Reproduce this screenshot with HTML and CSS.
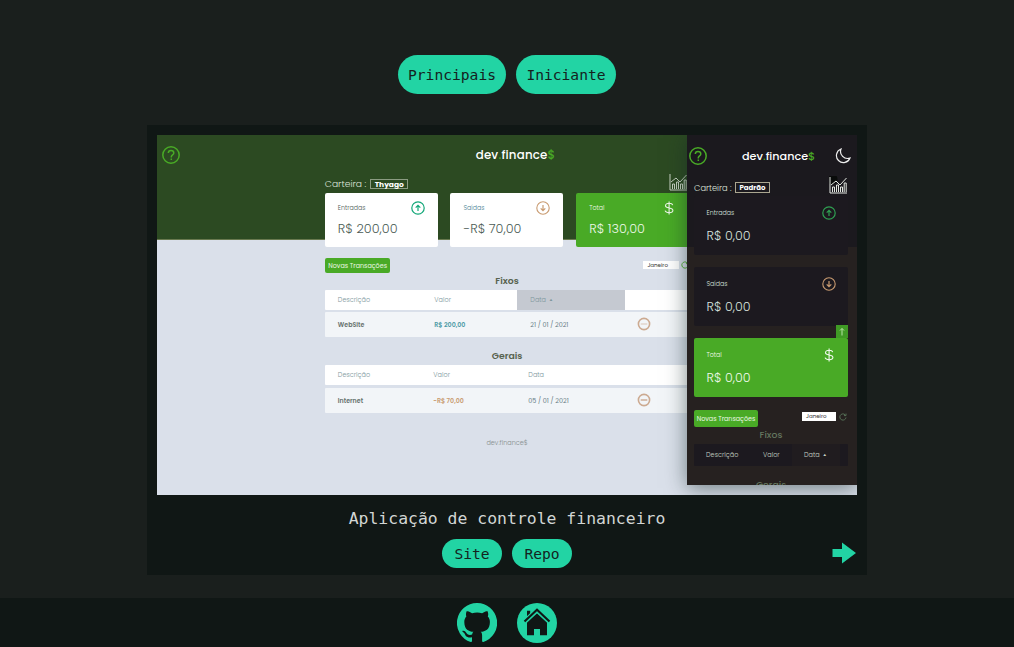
FILE: index.html
```html
<!DOCTYPE html>
<html lang="pt-BR">
<head>
<meta charset="utf-8">
<title>Projetos</title>
<link rel="stylesheet" href="styles.css">
</head>
<body>
<svg class="defs" width="0" height="0">
  <symbol id="help" viewBox="0 0 18 18"><circle cx="9" cy="9" r="8.2" fill="none" stroke="currentColor" stroke-width="1.5"/><path d="M6.3 7.1C6.3 5.4 7.4 4.5 9 4.5s2.8 1 2.8 2.5c0 1.9-2.5 2-2.5 3.8v.7M9.3 12.6v1.4" fill="none" stroke="currentColor" stroke-width="1.5"/></symbol>
  <symbol id="up" viewBox="0 0 14 14"><circle cx="7" cy="7" r="6.2" fill="none" stroke="currentColor" stroke-width="1.2"/><path d="M7 10V4.5M4.7 6.6 7 4.3l2.3 2.3" fill="none" stroke="currentColor" stroke-width="1.2"/></symbol>
  <symbol id="down" viewBox="0 0 14 14"><circle cx="7" cy="7" r="6.2" fill="none" stroke="currentColor" stroke-width="1.1"/><path d="M7 4v5.5M4.7 7.4 7 9.7l2.3-2.3" fill="none" stroke="currentColor" stroke-width="1.2"/></symbol>
  <symbol id="dollar" viewBox="0 0 10 14"><path d="M8.7 4.1C8.3 2.9 7 2.3 5.1 2.3 3 2.3 1.5 3.2 1.5 4.7 1.5 8 8.9 5.9 8.9 9.3c0 1.6-1.5 2.5-3.7 2.5C3 11.8 1.5 11 1.1 9.7M5.1.5v13" fill="none" stroke="currentColor" stroke-width="1.1"/></symbol>
  <symbol id="chart" viewBox="0 0 18 18"><path d="M1 1v16h17M3.500 16v-5h2v5M7.500 16V9h2v7M11.500 16v-5h2v5M15.200 16V7h2v9M2 9l5-4 4 4 6.500-7" fill="none" stroke="currentColor" stroke-width="1"/></symbol>
  <symbol id="minus" viewBox="0 0 14 14"><circle cx="7" cy="7" r="5.600" fill="none" stroke="currentColor" stroke-width="1.6"/><path d="M3.700 7h6.600" stroke="currentColor" stroke-width="1.400"/></symbol>
  <symbol id="minus-faint" viewBox="0 0 14 14"><circle cx="7" cy="7" r="5.600" fill="none" stroke="currentColor" stroke-width="1.6"/><path d="M3.700 7h6.600" stroke="currentColor" stroke-opacity=".45" stroke-width="1.400"/></symbol>
  <symbol id="refresh" viewBox="0 0 8 8"><path d="M7 4.500A3.100 3.100 0 1 1 6 1.700M7 .6v2H5" fill="none" stroke="currentColor" stroke-width=".9"/></symbol>
</svg>

<nav class="filters">
  <a class="filter">Principais</a>
  <a class="filter">Iniciante</a>
</nav>

<main class="project">
  <div class="shot">
    <div class="desk">
      <svg class="help"><use href="#help"/></svg>
      <div class="desk-body">
        <div class="logo">dev<i>.</i>finance<i>$</i></div>
        <div class="wallet"><span>Carteira :</span><b>Thyago</b><svg class="chart"><use href="#chart"/></svg></div>
        <div class="cards">
          <div class="card"><span class="label">Entradas</span><svg class="ic up"><use href="#up"/></svg><span class="value">R$ 200,00</span></div>
          <div class="card"><span class="label blue">Saídas</span><svg class="ic down"><use href="#down"/></svg><span class="value">-R$ 70,00</span></div>
          <div class="card total"><span class="label">Total</span><svg class="ic"><use href="#dollar"/></svg><span class="value">R$ 130,00</span></div>
        </div>
        <div class="tools"><span class="new">Novas Transações</span><span class="month">Janeiro</span><svg class="refresh"><use href="#refresh"/></svg></div>
        <h3>Fixos</h3>
        <div class="row head"><span>Descrição</span><span>Valor</span><span class="sorted">Data&nbsp; <em>▲</em></span><span></span></div>
        <div class="row"><b>WebSite</b><b class="in">R$ 200,00</b><span class="date">21 / 01 / 2021</span><svg class="del"><use href="#minus-faint"/></svg></div>
        <h3 class="second">Gerais</h3>
        <div class="row head late"><span>Descrição</span><span>Valor</span><span>Data</span><span></span></div>
        <div class="row late"><b>Internet</b><b class="out">-R$ 70,00</b><span class="date">05 / 01 / 2021</span><svg class="del"><use href="#minus"/></svg></div>
        <div class="credit">dev.finance$</div>
      </div>
    </div>

    <div class="phone">
      <div class="phone-top">
        <svg class="help"><use href="#help"/></svg>
        <div class="logo">dev<i>.</i>finance<i>$</i></div>
        <svg class="moon" viewBox="0 0 16 16"><path d="M6 1A7 7 0 1 0 15 10 7 7 0 0 1 6 1Z" fill="none" stroke="#eee" stroke-width="1.200"/></svg>
      </div>
      <div class="wallet"><span>Carteira :</span><b>Padrão</b><span class="chart-wrap"><svg class="chart"><use href="#chart"/></svg></span></div>
      <div class="stack">
        <div class="card"><span class="label">Entradas</span><svg class="ic up"><use href="#up"/></svg><span class="value">R$ 0,00</span></div>
        <div class="card"><span class="label">Saídas</span><svg class="ic down"><use href="#down"/></svg><span class="value">R$ 0,00</span></div>
        <div class="card total"><span class="label">Total</span><svg class="ic"><use href="#dollar"/></svg><span class="value">R$ 0,00</span>
          <svg class="tab" viewBox="0 0 12 12"><path d="M6 10V3M4 5l2-2 2 2" fill="none" stroke="#b9e3a8"/></svg></div>
      </div>
      <div class="tools"><span class="new">Novas Transações</span><span class="month">Janeiro</span><svg class="refresh"><use href="#refresh"/></svg></div>
      <h3>Fixos</h3>
      <div class="row head"><span>Descrição</span><span>Valor</span><span class="sorted">Data&nbsp; <em>▲</em></span><span></span></div>
      <h3 class="second">Gerais</h3>
    </div>
  </div>
  <h2>Aplicação de controle financeiro</h2>
  <div class="actions">
    <a class="action">Site</a><a class="action">Repo</a>
    <svg class="next" viewBox="0 0 24 22"><path d="M.5 7H10V.5L24 11 10 21.500V15H.5Z" fill="#22d4a4"/></svg>
  </div>
</main>

<footer class="footer">
  <svg class="social" viewBox="0 0 40 40"><path d="M20 0A20 20 0 0 0 13.700 39Q15 39.200 15 38V34.300C9.500 35.400 8.300 32 8.300 32 7.400 29.700 6 29 6 29c-1.800-1.300.2-1.200.2-1.200 2 .1 3 2 3 2 1.800 3 4.700 2.200 5.900 1.700.2-1.300.7-2.200 1.300-2.700-4.500-.5-9.100-2.200-9.100-9.900 0-2.200.8-4 2.100-5.400-.2-.5-.9-2.500.2-5.300 0 0 1.700-.5 5.500 2.100a19 19 0 0 1 10 0C28.900 7.700 30.600 8.200 30.600 8.200c1.100 2.800.4 4.800.2 5.300 1.300 1.400 2.100 3.200 2.100 5.400 0 7.700-4.700 9.400-9.200 9.900.8.600 1.400 1.800 1.400 3.700V38q0 1.200 1.300 1A20 20 0 0 0 20 0Z" fill="#22d4a4"/></svg>
  <svg class="social" viewBox="0 0 40 40"><circle cx="20" cy="20" r="20" fill="#22d4a4"/><path d="M10 7.800h3.200v4.500l-3.200 3ZM20 10 30 19V32.300h-7V26h-6v6.300h-7V19Z" fill="#101715"/><path d="M7.500 18.800 20 7l12.500 11.800" fill="none" stroke="#22d4a4" stroke-width="4.800"/><path d="M7.500 18.500 20 6.700l12.500 11.800" fill="none" stroke="#101715" stroke-width="2.100"/></svg>
</footer>
</body>
</html>
```
FILE: styles.css
```css
* { box-sizing: border-box; }
body {
  margin: 0;
  height: 647px;
  overflow: hidden;
  display: flex;
  flex-direction: column;
  align-items: center;
  background: #1a1f1d;
  font-family: "DejaVu Sans Mono", monospace;
}
svg { display: block; flex: none; }
.defs { position: absolute; }

.filters { display: flex; gap: 10px; margin-top: 55px; }
.filter {
  height: 39px;
  padding: 0 10px;
  border-radius: 20px;
  background: #22d4a4;
  color: #14231e;
  font-size: 14.62px;
  line-height: 40px;
}
.filter:last-child { padding: 0 10.400px; }

.project {
  width: 720px;
  height: 450px;
  margin-top: 31px;
  padding: 10px;
  background: #101715;
}
.project h2 {
  margin: 11px 0 0;
  height: 24px;
  text-align: center;
  color: #d2d6d4;
  font-size: 16.450px;
  font-weight: 400;
  line-height: 25px;
}
.actions {
  display: grid;
  grid-template-columns: 60px 60px 1fr;
  gap: 10px;
  padding-left: 285px;
  margin-top: 9px;
}
.action {
  height: 29px;
  border-radius: 15px;
  background: #22d4a4;
  color: #14231e;
  font-size: 14.620px;
  line-height: 30px;
  text-align: center;
}
.next { width: 24px; height: 22px; justify-self: end; margin: 3px 1px 0 0; }

.footer {
  display: flex;
  justify-content: center;
  gap: 20px;
  width: 100%;
  height: 49px;
  margin-top: 23px;
  padding-top: 5px;
  background: #101715;
}
.social { width: 40px; height: 40px; }

/* Project preview */
.shot {
  position: relative;
  width: 700px;
  height: 360px;
  overflow: hidden;
  font-family: Poppins, Inter, sans-serif;
  white-space: nowrap;
}
.desk {
  display: flex;
  height: 360px;
  background: linear-gradient(#2c4a22 0 104px, #69794f 104px 105px, #dae0ea 105px);
}
.help { width: 18px; height: 18px; color: #49aa26; }
.desk > .help { margin: 11px 0 0 5px; }
.desk-body { width: 364.500px; margin-left: 144.800px; }
.logo { color: #fff; font-size: 11.800px; font-weight: 500; line-height: 16px; text-align: center; }
.logo i { color: #49aa26; font-style: normal; }
.desk .logo { padding-top: 12px; height: 37px; padding-left: 17px; letter-spacing: .2px; }
.wallet { display: flex; align-items: center; color: #dfe5dc; font-size: 9.200px; font-weight: 300; }
.wallet b {
  border: 1px solid #8b9b82;
  color: #fff;
  font-size: 7.500px;
  font-weight: 700;
  text-align: center;
}
.desk .wallet { height: 20px; padding-top: 4px; }
.desk .wallet b { width: 38px; height: 10px; margin-left: 4px; line-height: 9px; }
.chart { width: 18px; height: 18px; color: #c6d0c1; }
.desk .chart { margin: -4px 2px 0 auto; }

.card {
  display: grid;
  grid-template-columns: 1fr 14px;
  grid-template-rows: 14px 1fr;
  border-radius: 2px;
  background: #fff;
  color: #4b5b54;
}
.label { font-size: 6.300px; font-weight: 300; line-height: 14px; }
.value { font-size: 12.800px; font-weight: 300; line-height: 16px; }
.ic { width: 14px; height: 14px; }
.up { color: #12a778; }
.down { color: #c99b71; }
.desk .cards { display: grid; grid-template-columns: repeat(3, 113px); gap: 12.700px; margin-top: 1px; }
.desk .card { height: 54px; padding: 8px 13px 0; }
.desk .value { margin-top: 6px; }
.blue { color: #477f92; }
.card.total { background: #49aa26; color: #eef8e9; }

.tools { display: flex; }
.new {
  border-radius: 2px;
  background: #49aa26;
  color: #e9f7e3;
  font-size: 6.400px;
  text-align: center;
}
.month { background: #fff; color: #333; font-size: 5.500px; }
.desk .tools { margin-top: 11px; }
.desk .new { width: 66px; height: 15px; line-height: 16px; }
.desk .month { width: 36px; height: 8px; margin: 3px 0 0 253px; padding-left: 4px; line-height: 8px; }
.refresh { width: 8px; height: 8px; color: #49aa26; }
.desk .refresh { margin: 3px 0 0 2px; }
h3 { margin: 0; color: #58634f; font-size: 9.300px; font-weight: 600; line-height: 15px; text-align: center; }
.desk h3 { height: 17px; }
.desk h3.second { margin-top: 11px; }
.row {
  display: grid;
  grid-template-columns: 96.500px 96px 108px 1fr;
  align-items: center;
  height: 25px;
  margin-top: 2px;
  border-radius: 1px;
  background: #f2f5f8;
  color: #667c85;
  font-size: 6.400px;
}
.row.late { grid-template-columns: 95.500px 95px 110px 1fr; margin-top: 3px; }
.row > span, .row > b { padding-left: 13px; }
.row b { color: #66716d; font-weight: 600; font-size: 6.300px; }
.row .in { color: #4b9aa5; }
.row .out { color: #c99b71; }
.row.head { height: 20px; margin-top: 0; background: #fff; color: #7e979c; font-weight: 300; font-size: 6.500px; }
.desk .row.head { margin-top: 0; }
.desk .sorted { height: 20px; line-height: 20px; background: #c5c9d1; }
.row em { font-size: 3px; font-style: normal; vertical-align: 1px; }
.del { width: 14px; height: 14px; margin: -1px 0 0 12px; color: #ccaa91; }
.credit { margin-top: 25px; text-align: center; color: #858e8c; font-size: 6.500px; font-weight: 300; line-height: 10px; }

/* Dark mobile preview, overlapping the desktop one */
.phone {
  position: absolute;
  top: 0;
  right: 0;
  width: 170px;
  height: 350px;
  padding: 0 9px 0 7px;
  overflow: hidden;
  background: linear-gradient(#1b191e 0 112px, #262120 112px);
  box-shadow: 0 3px 20px rgba(20, 40, 40, .55);
}
.phone-top { display: flex; align-items: center; height: 42px; margin: 0 -4px 0 -5px; }
.phone .logo { width: 73px; margin-left: 35px; font-size: 11.200px; }
.moon { width: 16px; height: 16px; margin-left: 20px; }
.phone .wallet { height: 19px; font-size: 8.300px; }
.phone .wallet b { width: 35px; height: 11px; margin: 2px 0 0 5px; font-size: 7px; line-height: 9px; border-color: #aaa690; }
.phone .wallet > span:first-child { width: 36px; padding-top: 3px; }
.chart-wrap { margin: -4px 1px 0 auto; background: radial-gradient(circle at 3px 3px, #090b0a 5px, transparent 6px); }
.phone .chart { color: #e4e8e2; }
.stack { display: grid; gap: 12.700px; }
.phone .card { height: 58.500px; padding: 10px 12.500px 0; background: #1c191f; color: #d8e3df; }
.phone .card.total { position: relative; background: #49aa26; color: #f1faee; }
.phone .value { margin-top: 8px; font-size: 12.700px; }
.phone .up { color: #2fa052; }
.tab { position: absolute; right: 0; top: -13px; width: 12px; height: 13px; background: #409a25; }
.phone .tools { margin-top: 13.500px; }
.phone .new { width: 64px; height: 17px; line-height: 17px; }
.phone .month { width: 34px; height: 9px; margin: 2px 0 0 44px; padding-left: 4px; line-height: 9px; }
.phone .refresh { margin: 3px 0 0 3px; color: #5b785c; }
.phone h3 { height: 17px; color: #64775f; font-weight: 500; }
.phone .row { grid-template-columns: 57px 41px 48px 1fr; height: 22px; background: #1c191f; color: #c7d3c5; }
.phone .row > span { padding-left: 12px; }
.phone .row .sorted { height: 22px; line-height: 22px; background: #201c1f; }
.phone h3.second { margin-top: 11px; }
```
